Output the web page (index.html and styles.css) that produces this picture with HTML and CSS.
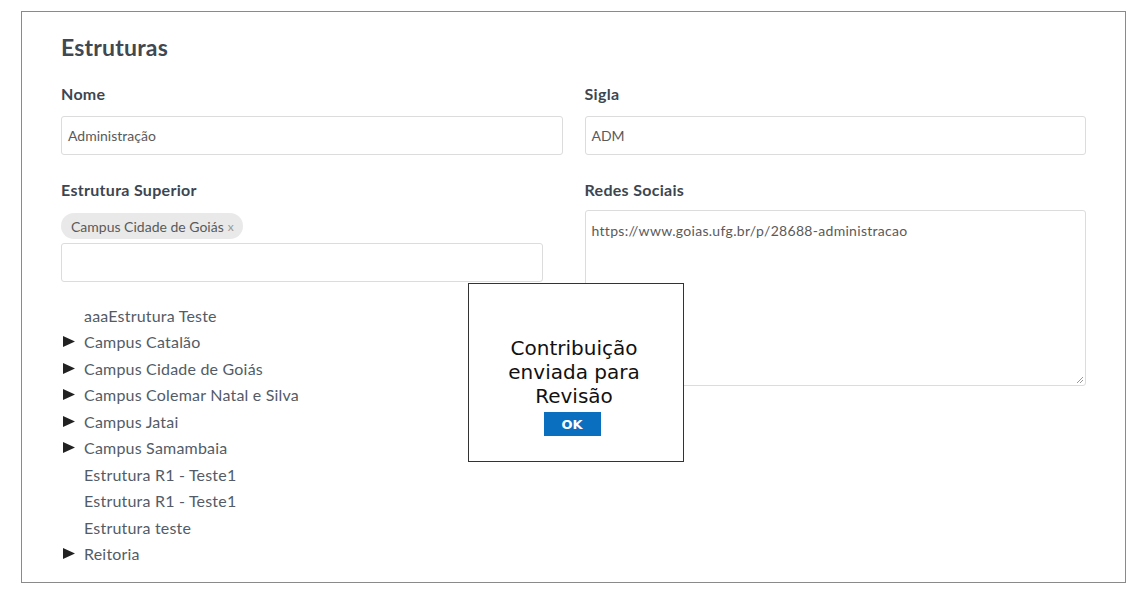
FILE: index.html
```html
<!DOCTYPE html>
<html lang="pt-BR">
<head>
<meta charset="utf-8">
<title>Estruturas</title>
<link rel="stylesheet" href="styles.css">
</head>
<body>
<div class="panel">
  <h2 class="title">Estruturas</h2>
  <div class="cols">
    <div class="col">
      <label class="label first">Nome</label>
      <div class="input">Administração</div>
      <label class="label">Estrutura Superior</label>
      <div class="chips"><span class="chip">Campus Cidade de Goiás <span class="x">x</span></span></div>
      <div class="input narrow"></div>
      <ul class="tree">
        <li><span class="arrow none"></span>aaaEstrutura Teste</li>
        <li><span class="arrow"><svg width="12" height="11" viewBox="0 0 12 11"><path d="M0 0 L12 5.5 L0 11 Z" fill="#222"/></svg></span>Campus Catalão</li>
        <li><span class="arrow"><svg width="12" height="11" viewBox="0 0 12 11"><path d="M0 0 L12 5.5 L0 11 Z" fill="#222"/></svg></span>Campus Cidade de Goiás</li>
        <li><span class="arrow"><svg width="12" height="11" viewBox="0 0 12 11"><path d="M0 0 L12 5.5 L0 11 Z" fill="#222"/></svg></span>Campus Colemar Natal e Silva</li>
        <li><span class="arrow"><svg width="12" height="11" viewBox="0 0 12 11"><path d="M0 0 L12 5.5 L0 11 Z" fill="#222"/></svg></span>Campus Jatai</li>
        <li><span class="arrow"><svg width="12" height="11" viewBox="0 0 12 11"><path d="M0 0 L12 5.5 L0 11 Z" fill="#222"/></svg></span>Campus Samambaia</li>
        <li><span class="arrow none"></span>Estrutura R1 - Teste1</li>
        <li><span class="arrow none"></span>Estrutura R1 - Teste1</li>
        <li><span class="arrow none"></span>Estrutura teste</li>
        <li><span class="arrow"><svg width="12" height="11" viewBox="0 0 12 11"><path d="M0 0 L12 5.5 L0 11 Z" fill="#222"/></svg></span>Reitoria</li>
      </ul>
    </div>
    <div class="col">
      <label class="label first">Sigla</label>
      <div class="input">ADM</div>
      <label class="label">Redes Sociais</label>
      <div class="textarea">https://www.goias.ufg.br/p/28688-administracao<svg class="grip" width="8" height="8" viewBox="0 0 8 8"><path d="M7 1 L1 7 M7 4 L4 7" stroke="#999" stroke-width="1"/></svg></div>
    </div>
  </div>
  <div class="modal">
    <p class="msg">Contribuição enviada para Revisão</p>
    <button class="ok">OK</button>
  </div>
</div>
</body>
</html>
```

FILE: styles.css
```css
* { box-sizing: border-box; }
html, body { margin: 0; padding: 0; background: #fff; }
body { font-family: Lato, "Open Sans", sans-serif; color: #3d4650; }

.panel {
  position: relative;
  margin: 11px 0 0 21px;
  width: 1105px;
  height: 572px;
  border: 1px solid #8a8a8a;
  padding: 21px 39px 0 39px;
}

.title {
  margin: 0;
  font-family: Lato, sans-serif;
  font-weight: 700;
  font-size: 23px;
  letter-spacing: 0.2px;
  line-height: 28px;
  color: #3f4853;
}

.cols { display: flex; gap: 22px; }
.col { flex: 1 1 0; display: flex; flex-direction: column; align-items: flex-start; }

.label {
  display: block;
  font-family: Lato, sans-serif;
  font-weight: 700;
  font-size: 16px;
  letter-spacing: 0.3px;
  line-height: 20px;
  color: #3d4650;
  margin: 25px 0 10px 0;
}
.label.first { margin: 23px 0 12px 0; }

.input {
  width: 100%;
  height: 39px;
  border: 1px solid #dcdcdc;
  border-radius: 3px;
  padding: 0 6px;
  font-family: Lato, sans-serif;
  font-size: 14px;
  line-height: 37px;
  color: #5a5a5a;
}
.input.narrow { width: 482px; margin-top: 4px; }

.chips { margin-top: 3px; }
.chip {
  display: inline-flex;
  align-items: center;
  gap: 4px;
  height: 26px;
  padding: 0 9px 0 10px;
  background: #e9e9e9;
  border-radius: 13px;
  font-size: 14px;
  color: #5a5a5a;
}
.chip .x { color: #999; font-size: 12px; }

.tree {
  list-style: none;
  margin: 20px 0 0 0;
  padding: 0 0 0 2px;
}
.tree li {
  display: flex;
  align-items: center;
  height: 26.5px;
  font-size: 16px;
  letter-spacing: 0.2px;
  color: #535c66;
}
.arrow { width: 21px; display: inline-flex; align-items: center; }

.textarea {
  position: relative;
  width: 100%;
  height: 176px;
  border: 1px solid #dcdcdc;
  border-radius: 3px;
  padding: 11px 6px;
  font-size: 14px;
  letter-spacing: 0.3px;
  line-height: 18px;
  color: #5a5a5a;
}
.grip { position: absolute; right: 1px; bottom: 1px; }

.modal {
  position: absolute;
  left: 446px;
  top: 271px;
  width: 216px;
  height: 179px;
  background: #fff;
  border: 1px solid #333;
  padding-top: 52px;
  display: flex;
  flex-direction: column;
  align-items: center;
  font-family: "DejaVu Sans", sans-serif;
}
.msg {
  margin: 0 4px 0 0;
  width: 150px;
  text-align: center;
  font-size: 20px;
  line-height: 24px;
  color: #111;
}
.ok {
  margin: 4px 8px 0 0;
  width: 57px;
  height: 24px;
  border: 0;
  background: #0b6fc0;
  color: #fff;
  font-family: "DejaVu Sans", sans-serif;
  font-weight: 700;
  font-size: 13px;
  padding: 0;
}
```
